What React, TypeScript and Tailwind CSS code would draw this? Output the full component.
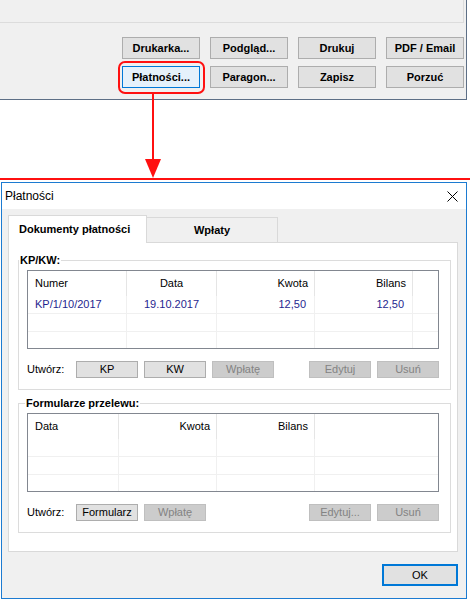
import React from "react";

function TopBtn({ label, active }: { label: string; active?: boolean }) {
  return (
    <div
      className={
        "w-[78px] h-[22px] flex items-center justify-center text-[11px] font-bold text-black border " +
        (active ? "bg-[#e5f1fb] border-[#0078d7]" : "bg-[#e1e1e1] border-[#adadad]")
      }
    >
      {label}
    </div>
  );
}

function SmallBtn({ label, disabled }: { label: string; disabled?: boolean }) {
  return (
    <div
      className={
        "w-[62px] h-[17px] flex items-center justify-center text-[11px] border " +
        (disabled
          ? "bg-[#cccccc] border-[#bfbfbf] text-[#838383]"
          : "bg-[#e1e1e1] border-[#adadad] text-black")
      }
    >
      {label}
    </div>
  );
}

function Group({
  title,
  labelLeft,
  children,
}: {
  title: string;
  labelLeft: string;
  children: React.ReactNode;
}) {
  return (
    <div className="relative h-[130px] border border-[#dcdcdc] pt-[9px] pl-[8px] pr-[11px] flex flex-col">
      <span
        className={
          "absolute -top-[8px] bg-white px-[1px] text-[11px] leading-[14px] font-bold text-black " +
          labelLeft
        }
      >
        {title}
      </span>
      {children}
    </div>
  );
}

function ActionRow({ left, right }: { left: React.ReactNode; right: React.ReactNode }) {
  return (
    <div className="mt-[12px] h-[17px] flex items-center justify-between">
      <div className="flex items-center">
        <span className="w-[49px] text-[11px] text-black">Utwórz:</span>
        <div className="flex gap-[6px]">{left}</div>
      </div>
      <div className="flex gap-[6px]">{right}</div>
    </div>
  );
}

export default function App() {
  return (
    <div className="w-[470px] h-[600px] bg-white relative overflow-hidden font-['Liberation_Sans',Arial,sans-serif]">
      {/* Top panel */}
      <div className="w-[467px] h-[100px] bg-[#f0f0f0] border-r border-b border-[#5d6f86] flex flex-col">
        <div className="h-[23px] w-[464px] border-r border-b border-[#dcdcdc]" />
        <div className="mt-[14px] flex flex-col gap-[7px] items-end pr-[2px]">
          <div className="flex gap-[10px]">
            <TopBtn label="Drukarka..." />
            <TopBtn label="Podgląd..." />
            <TopBtn label="Drukuj" />
            <TopBtn label="PDF / Email" />
          </div>
          <div className="flex gap-[10px]">
            <div className="relative">
              <TopBtn label="Płatności..." active />
              <div className="absolute -left-[4px] -top-[5px] -right-[5px] -bottom-[6px] border-2 border-[#ff1010] rounded-[7px]" />
            </div>
            <TopBtn label="Paragon..." />
            <TopBtn label="Zapisz" />
            <TopBtn label="Porzuć" />
          </div>
        </div>
      </div>

      {/* Annotation arrow */}
      <svg
        className="absolute left-0 top-0 pointer-events-none"
        width="470"
        height="182"
        viewBox="0 0 470 182"
      >
        <rect x="152" y="94" width="2" height="68" fill="#ff1010" />
        <polygon points="145,159 161,159 153,178" fill="#ff1010" />
      </svg>

      <div className="h-[78px]" />
      <div className="h-[2px] bg-[#ff1010]" />
      <div className="h-[2px]" />

      {/* Dialog */}
      <div className="ml-[1px] w-[466px] h-[417px] border border-[#1c7bd1] flex flex-col">
        <div className="h-[26px] bg-white flex items-center justify-between pl-[3px] pr-[8px]">
          <span className="text-[12px] text-black">Płatności</span>
          <svg width="11" height="11" viewBox="0 0 11 11">
            <path d="M0.5 0.5 L10.5 10.5 M10.5 0.5 L0.5 10.5" stroke="#000" strokeWidth="1" fill="none" />
          </svg>
        </div>
        <div className="flex-1 bg-[#f0f0f0] pt-[6px] pl-[6px] pr-[8px] flex flex-col">
          {/* Tabs */}
          <div className="h-[27px] flex items-end">
            <div className="relative z-[1] -mb-px h-[28px] w-[139px] bg-white border-t border-l border-r border-[#d9d9d9] flex items-center pl-[10px] text-[11px] font-bold text-black">
              Dokumenty płatności
            </div>
            <div className="h-[25px] w-[131px] border-t border-r border-[#d9d9d9] bg-[#f0f0f0] flex items-center justify-center text-[11px] font-bold text-black">
              Wpłaty
            </div>
          </div>
          {/* Panel */}
          <div className="h-[310px] w-[450px] bg-white border border-[#d9d9d9] pt-[17px] pl-[9px] pr-[6px] flex flex-col gap-[13px]">
            <Group title="KP/KW:" labelLeft="left-[0px]">
              <div className="h-[79px] border border-[#828790] bg-white overflow-hidden flex flex-col text-[11px]">
                <div className="h-[25px] grid grid-cols-[99px_90px_98px_98px_1fr] text-black">
                  <div className="border-r border-[#e5e5e5] flex items-center pl-[7px]">Numer</div>
                  <div className="border-r border-[#e5e5e5] flex items-center justify-center">Data</div>
                  <div className="border-r border-[#e5e5e5] flex items-center justify-end pr-[6px]">Kwota</div>
                  <div className="border-r border-[#e5e5e5] flex items-center justify-end pr-[6px]">Bilans</div>
                  <div />
                </div>
                <div className="h-[18px] grid grid-cols-[99px_90px_98px_98px_1fr] border-b border-[#f0f0f0] text-[#1f1f8f]">
                  <div className="border-r border-[#f0f0f0] flex items-center pl-[7px]">KP/1/10/2017</div>
                  <div className="border-r border-[#f0f0f0] flex items-center justify-center">19.10.2017</div>
                  <div className="border-r border-[#f0f0f0] flex items-center justify-end pr-[8px]">12,50</div>
                  <div className="border-r border-[#f0f0f0] flex items-center justify-end pr-[8px]">12,50</div>
                  <div />
                </div>
                <div className="h-[18px] grid grid-cols-[99px_90px_98px_98px_1fr] border-b border-[#f0f0f0]">
                  <div className="border-r border-[#f0f0f0]" />
                  <div className="border-r border-[#f0f0f0]" />
                  <div className="border-r border-[#f0f0f0]" />
                  <div className="border-r border-[#f0f0f0]" />
                  <div />
                </div>
                <div className="flex-1 grid grid-cols-[99px_90px_98px_98px_1fr]">
                  <div className="border-r border-[#f0f0f0]" />
                  <div className="border-r border-[#f0f0f0]" />
                  <div className="border-r border-[#f0f0f0]" />
                  <div className="border-r border-[#f0f0f0]" />
                  <div />
                </div>
              </div>
              <ActionRow
                left={
                  <>
                    <SmallBtn label="KP" />
                    <SmallBtn label="KW" />
                    <SmallBtn label="Wpłatę" disabled />
                  </>
                }
                right={
                  <>
                    <SmallBtn label="Edytuj" disabled />
                    <SmallBtn label="Usuń" disabled />
                  </>
                }
              />
            </Group>
            <Group title="Formularze przelewu:" labelLeft="left-[6px]">
              <div className="h-[79px] border border-[#828790] bg-white overflow-hidden flex flex-col text-[11px]">
                <div className="h-[25px] grid grid-cols-[91px_98px_98px_1fr] text-black">
                  <div className="border-r border-[#e5e5e5] flex items-center pl-[7px]">Data</div>
                  <div className="border-r border-[#e5e5e5] flex items-center justify-end pr-[6px]">Kwota</div>
                  <div className="border-r border-[#e5e5e5] flex items-center justify-end pr-[6px]">Bilans</div>
                  <div />
                </div>
                <div className="h-[18px] grid grid-cols-[91px_98px_98px_1fr] border-b border-[#f0f0f0]">
                  <div className="border-r border-[#f0f0f0]" />
                  <div className="border-r border-[#f0f0f0]" />
                  <div className="border-r border-[#f0f0f0]" />
                  <div />
                </div>
                <div className="h-[18px] grid grid-cols-[91px_98px_98px_1fr] border-b border-[#f0f0f0]">
                  <div className="border-r border-[#f0f0f0]" />
                  <div className="border-r border-[#f0f0f0]" />
                  <div className="border-r border-[#f0f0f0]" />
                  <div />
                </div>
                <div className="flex-1 grid grid-cols-[91px_98px_98px_1fr]">
                  <div className="border-r border-[#f0f0f0]" />
                  <div className="border-r border-[#f0f0f0]" />
                  <div className="border-r border-[#f0f0f0]" />
                  <div />
                </div>
              </div>
              <ActionRow
                left={
                  <>
                    <SmallBtn label="Formularz" />
                    <SmallBtn label="Wpłatę" disabled />
                  </>
                }
                right={
                  <>
                    <SmallBtn label="Edytuj..." disabled />
                    <SmallBtn label="Usuń" disabled />
                  </>
                }
              />
            </Group>
          </div>
          {/* OK */}
          <div className="mt-[12px] flex justify-end">
            <div className="w-[76px] h-[22px] border-2 border-[#0078d7] bg-[#e1e1e1] flex items-center justify-center text-[11px] text-black">
              OK
            </div>
          </div>
        </div>
      </div>
    </div>
  );
}
